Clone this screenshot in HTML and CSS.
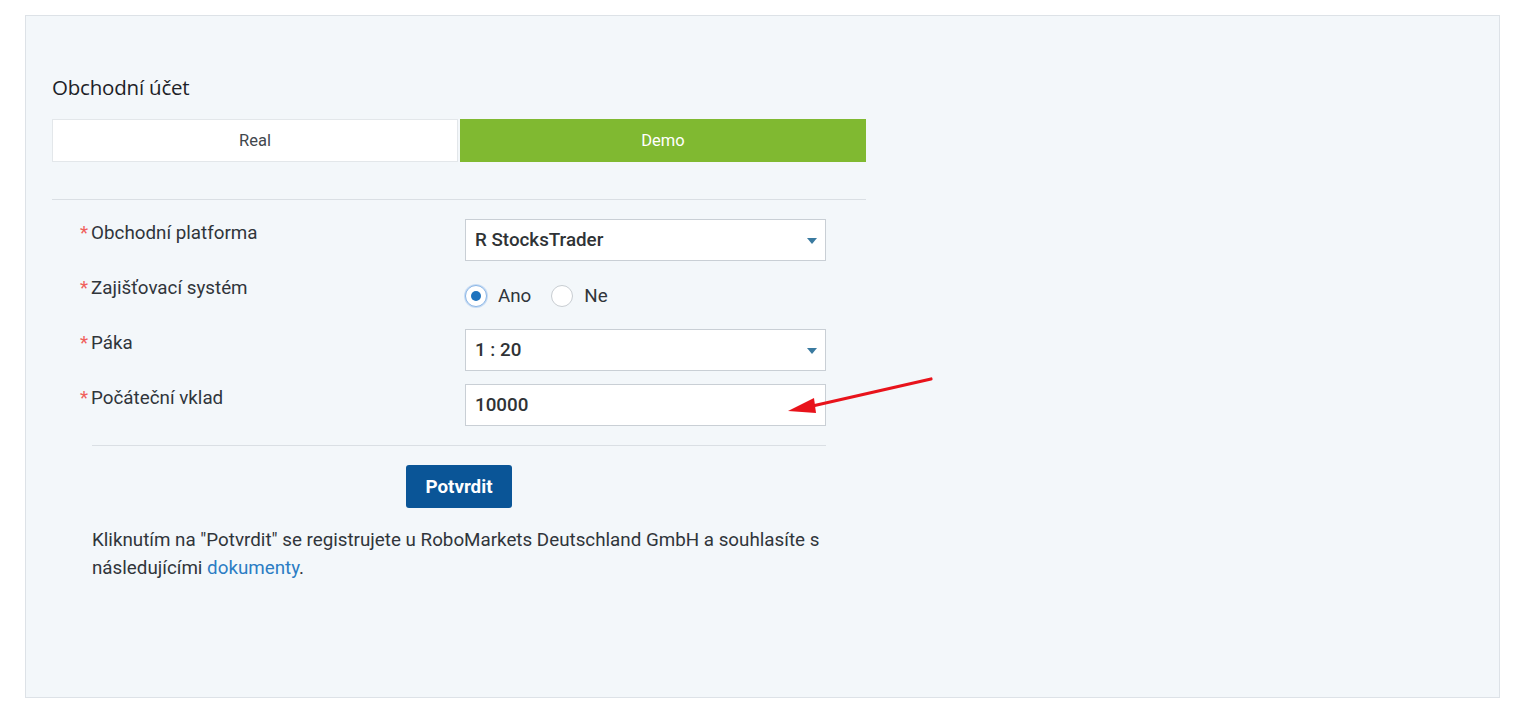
FILE: index.html
```html
<!DOCTYPE html>
<html lang="cs">
<head>
<meta charset="utf-8">
<title>Obchodní účet</title>
<link rel="stylesheet" href="styles.css">
</head>
<body>
<div class="panel">
  <div class="form">
    <h2 class="title">Obchodní účet</h2>
    <div class="tabs">
      <div class="tab">Real</div>
      <div class="tab tab-active">Demo</div>
    </div>
    <div class="divider"></div>
    <div class="rows">
      <div class="row">
        <div class="label"><span class="req">*</span>Obchodní platforma</div>
        <div class="control select">R StocksTrader<span class="caret"></span></div>
      </div>
      <div class="row">
        <div class="label"><span class="req">*</span>Zajišťovací systém</div>
        <div class="control radios">
          <span class="radio checked"></span><span class="radio-text">Ano</span>
          <span class="radio"></span><span class="radio-text">Ne</span>
        </div>
      </div>
      <div class="row">
        <div class="label"><span class="req">*</span>Páka</div>
        <div class="control select">1 : 20<span class="caret"></span></div>
      </div>
      <div class="row">
        <div class="label"><span class="req">*</span>Počáteční vklad</div>
        <div class="control select input">10000</div>
        <svg class="arrow" width="160" height="50" viewBox="0 0 160 50">
          <line x1="153" y1="5" x2="30" y2="33" stroke="#e8131b" stroke-width="3.2" stroke-linecap="round"/>
          <polygon points="10,37 36,24 38,39" fill="#e8131b"/>
        </svg>
      </div>
    </div>
    <div class="footer">
      <div class="divider2"></div>
      <div class="btn-wrap"><button class="btn">Potvrdit</button></div>
      <p class="note">Kliknutím na "Potvrdit" se registrujete u RoboMarkets Deutschland GmbH a souhlasíte s následujícími <a class="link" href="#">dokumenty</a>.</p>
    </div>
  </div>
</div>
</body>
</html>
```

FILE: styles.css
```css
html, body {
  margin: 0;
  padding: 0;
  background: #ffffff;
}
body {
  font-family: Roboto, "Liberation Sans", Arial, sans-serif;
  color: #2f3336;
}
.panel {
  margin: 15px 0 0 25px;
  width: 1473px;
  height: 681px;
  background: #f3f7fa;
  border: 1px solid #dde2e7;
}
.form {
  width: 814px;
  margin-left: 26px;
}
.title {
  margin: 0;
  padding-top: 57px;
  font-family: "Open Sans", "Noto Sans", sans-serif;
  font-weight: 500;
  font-size: 20.5px;
  line-height: 28px;
  color: #1d2227;
  letter-spacing: -0.2px;
}
.tabs {
  display: flex;
  gap: 2px;
  margin-top: 18px;
}
.tab {
  flex: 1;
  height: 43px;
  box-sizing: border-box;
  border: 1px solid #e3e7ea;
  background: #ffffff;
  display: flex;
  align-items: center;
  justify-content: center;
  font-size: 16.5px;
  color: #41474d;
}
.tab-active {
  background: #80b931;
  border-color: #80b931;
  color: #ffffff;
}
.divider {
  height: 1px;
  background: #dadfe4;
  margin-top: 37px;
}
.rows {
  padding: 19px 40px 0 28px;
}
.row {
  display: flex;
  align-items: flex-start;
  height: 42px;
  margin-bottom: 13px;
  position: relative;
}
.row:last-child {
  margin-bottom: 0;
}
.label {
  width: 385px;
  font-size: 18.8px;
  line-height: 28px;
  color: #30353a;
}
.req {
  color: #f0605c;
  margin-right: 3px;
}
.control {
  width: 361px;
  height: 42px;
  box-sizing: border-box;
}
.select {
  position: relative;
  background: #ffffff;
  border: 1px solid #c9cfd5;
  display: flex;
  align-items: center;
  padding-left: 9px;
  font-size: 18.8px;
  font-weight: 500;
  color: #2f3336;
}
.caret {
  position: absolute;
  right: 8px;
  top: 18px;
  width: 0;
  height: 0;
  border-left: 5px solid transparent;
  border-right: 5px solid transparent;
  border-top: 6px solid #3a7aa0;
}
.radios {
  display: flex;
  align-items: center;
  padding-top: 2px;
  height: 42px;
}
.radio {
  width: 22px;
  height: 22px;
  box-sizing: border-box;
  border-radius: 50%;
  border: 1px solid #c8cdd2;
  background: #ffffff;
  position: relative;
}
.radio.checked {
  border: 1px solid #8ab6e6;
  box-shadow: 0 0 0 1px #c8dcf3;
}
.radio.checked::after {
  content: "";
  position: absolute;
  left: 5px;
  top: 5px;
  width: 10px;
  height: 10px;
  border-radius: 50%;
  background: #1e73be;
}
.radio-text {
  font-size: 18.8px;
  color: #30353a;
  margin: 0 20px 0 11px;
}
.arrow {
  position: absolute;
  left: 698px;
  top: -10px;
}
.footer {
  padding: 0 40px 0 40px;
}
.divider2 {
  height: 1px;
  background: #dadfe4;
  margin-top: 19px;
}
.btn-wrap {
  padding: 19px 0 0 314px;
}
.btn {
  width: 106px;
  height: 43px;
  border: none;
  border-radius: 3px;
  background: #0a5597;
  color: #ffffff;
  font-family: Roboto, "Liberation Sans", Arial, sans-serif;
  font-weight: 700;
  font-size: 18.8px;
}
.note {
  margin: 18px 0 0 0;
  font-size: 18.8px;
  line-height: 28px;
  color: #30353a;
}
.link {
  color: #2b7dc4;
  text-decoration: none;
}
```
